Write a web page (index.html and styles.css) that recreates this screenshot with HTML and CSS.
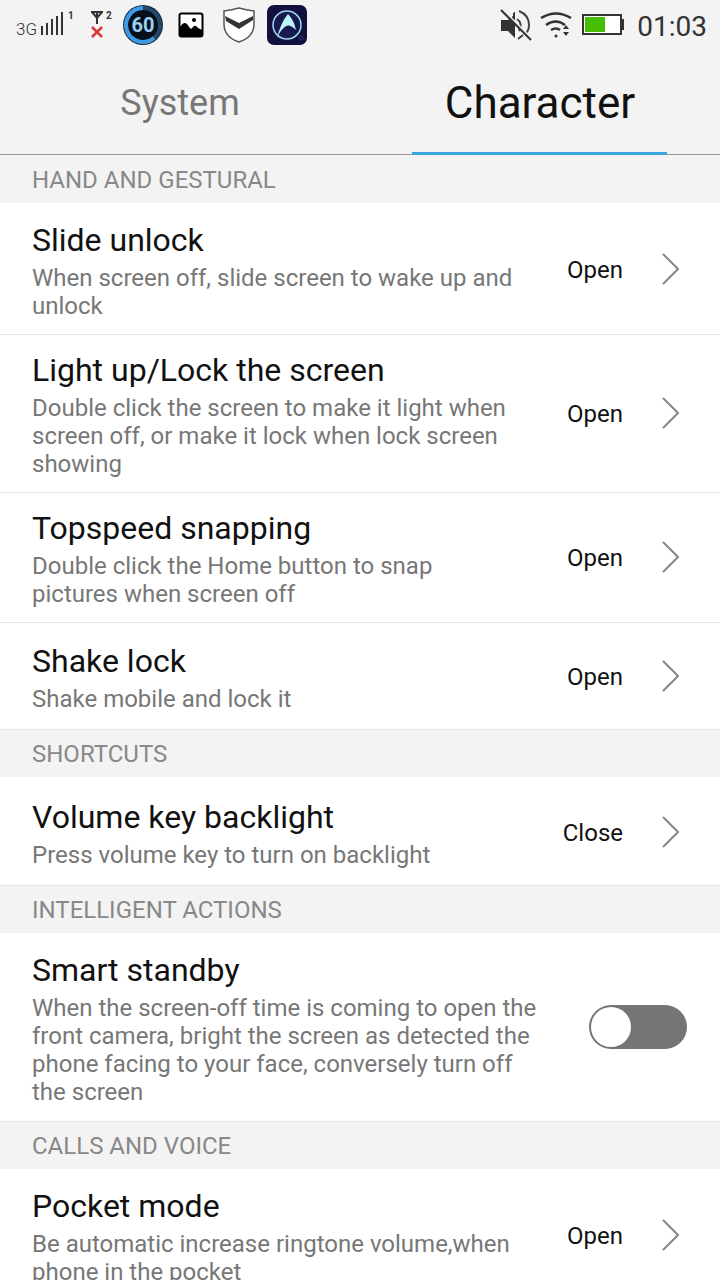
FILE: index.html
```
<!DOCTYPE html>
<html lang="en">
<head>
    <meta charset="UTF-8">
    <meta name="viewport" content="width=device-width, initial-scale=1.0">
    <title>Settings</title>
    <link rel="stylesheet" href="styles.css">
</head>
<body>
    <div class="status">
        <div class="status-left">
            <svg class="signal" width="60" height="34" viewBox="0 0 60 34">
                <text class="net" x="0" y="27">3G</text>
                <path d="M26 18v9M31 15v12M36 11v16M41 8v19M46 4v23" stroke="#333" stroke-width="2"/>
                <text class="sim" x="52" y="11">1</text>
            </svg>
            <svg class="nosignal" width="24" height="34" viewBox="0 0 24 34">
                <path d="M1 4h12M2 4l5 6 5-6M7 3v13" fill="none" stroke="#333" stroke-width="2"/>
                <path d="M2 19l10 10M12 19L2 29" stroke="#d8383b" stroke-width="2.500"/>
                <text class="sim" x="16" y="11">2</text>
            </svg>
            <svg class="app" width="40" height="40" viewBox="0 0 40 40">
                <circle cx="20" cy="20" r="20" fill="#172b3b"/>
                <circle cx="20" cy="20" r="17" fill="#07101a" stroke="#24486b" stroke-width="4"/>
                <path d="M20 3A17 17 0 1 0 31 33" fill="none" stroke="#3d9be6" stroke-width="4"/>
                <text class="sixty" x="20" y="27" text-anchor="middle">60</text>
            </svg>
            <svg class="photo" width="26" height="26" viewBox="0 0 26 26">
                <rect x="1.500" y="1.500" width="23" height="23" rx="2" fill="#fff" stroke="#000" stroke-width="2"/>
                <circle cx="16" cy="8" r="2" fill="#000"/>
                <path d="M2 15q5-8 9 0l2 2 3-3q2-1 4 2l4 2v6H2z" fill="#000"/>
            </svg>
            <svg class="shield" width="32" height="36" viewBox="0 0 32 36">
                <path d="M1 4Q9 3 16 1q7 2 15 3v13q0 13-15 18Q1 30 1 17z" fill="#fff" stroke="#555" stroke-width="1.500"/>
                <path d="M2 9l14 7 14-7v4L16 22 3 14z" fill="#333"/>
            </svg>
            <svg class="app" width="40" height="40" viewBox="0 0 40 40">
                <rect width="40" height="40" rx="7" fill="#12113d"/>
                <circle cx="20" cy="20" r="14" fill="#171950" stroke="#9ed8ee" stroke-width="1.500"/>
                <path d="M10 33Q14 17 21 9q6 6 8 16-6-6-10-4-5 3-9 12z" fill="#bdf5f7"/>
                <circle cx="34" cy="33" r="2" fill="none" stroke="#34336b"/>
            </svg>
        </div>
        <div class="status-right">
            <svg class="mute" width="32" height="32" viewBox="0 0 32 32">
                <path d="M1 11h7l5-4V4l2-1v26l-7-7H1z" fill="#333"/>
                <path d="M17 10q6 4 2 12M19 2q10 4 10 14 0 6-4 9M23 26l-5 4" fill="none" stroke="#444" stroke-width="2"/>
                <path d="M3 1l29 29" stroke="#f3f3f3" stroke-width="2"/>
                <path d="M1 1l30 30" stroke="#333" stroke-width="2"/>
            </svg>
            <svg class="wifi" width="32" height="26" viewBox="0 0 32 26">
                <path d="M1 6q15-9 30 0M6 13q10-7 19 0M11 18q5-3 9 0" fill="none" stroke="#333" stroke-width="2.500"/>
                <circle cx="16" cy="24" r="1.500" fill="#333"/>
                <path d="M23 17l3-4 3 4zM23 20h6l-3 4z" fill="#333"/>
            </svg>
            <svg class="battery" width="42" height="22" viewBox="0 0 42 22">
                <rect x="1" y="1" width="38" height="19" fill="#fff" stroke="#333" stroke-width="2"/>
                <rect x="3" y="3" width="20" height="15" fill="#45bd00"/>
                <rect x="39" y="5" width="3" height="11" fill="#333"/>
            </svg>
            <span class="clock">01:03</span>
        </div>
    </div>

    <nav class="tabs">
        <button class="tab">System</button>
        <button class="tab active">Character</button>
    </nav>

    <main class="list">
        <section>
            <h2>HAND AND GESTURAL</h2>
            <a class="row" href="#">
                <span class="text"><span class="title">Slide unlock</span><span class="desc">When screen off, slide screen to wake up and unlock</span></span>
                <span class="value">Open</span>
                <svg class="arrow" viewBox="0 0 18 32"><path d="M2 1l15 15L2 31"/></svg>
            </a>
            <a class="row" href="#">
                <span class="text"><span class="title">Light up/Lock the screen</span><span class="desc">Double click the screen to make it light when screen off, or make it lock when lock screen showing</span></span>
                <span class="value">Open</span>
                <svg class="arrow" viewBox="0 0 18 32"><path d="M2 1l15 15L2 31"/></svg>
            </a>
            <a class="row" href="#">
                <span class="text"><span class="title">Topspeed snapping</span><span class="desc">Double click the Home button to snap pictures when screen off</span></span>
                <span class="value">Open</span>
                <svg class="arrow" viewBox="0 0 18 32"><path d="M2 1l15 15L2 31"/></svg>
            </a>
            <a class="row" href="#">
                <span class="text"><span class="title">Shake lock</span><span class="desc">Shake mobile and lock it</span></span>
                <span class="value">Open</span>
                <svg class="arrow" viewBox="0 0 18 32"><path d="M2 1l15 15L2 31"/></svg>
            </a>
        </section>
        <section>
            <h2>SHORTCUTS</h2>
            <a class="row" href="#">
                <span class="text"><span class="title">Volume key backlight</span><span class="desc">Press volume key to turn on backlight</span></span>
                <span class="value">Close</span>
                <svg class="arrow" viewBox="0 0 18 32"><path d="M2 1l15 15L2 31"/></svg>
            </a>
        </section>
        <section>
            <h2>INTELLIGENT ACTIONS</h2>
            <label class="row switch-row" for="standby">
                <span class="text"><span class="title">Smart standby</span><span class="desc">When the screen-off time is coming to open the front camera, bright the screen as detected the phone facing to your face, conversely turn off the screen</span></span>
                <input class="switch" type="checkbox" id="standby">
            </label>
        </section>
        <section>
            <h2>CALLS AND VOICE</h2>
            <a class="row" href="#">
                <span class="text"><span class="title">Pocket mode</span><span class="desc">Be automatic increase ringtone volume,when phone in the pocket</span></span>
                <span class="value">Open</span>
                <svg class="arrow" viewBox="0 0 18 32"><path d="M2 1l15 15L2 31"/></svg>
            </a>
        </section>
    </main>
</body>
</html>
```
FILE: styles.css
```
*{
    box-sizing: border-box;
}
body{
    margin: 0;
    height: 100vh;
    display: flex;
    flex-direction: column;
    background-color: #f3f3f3;
    color: #111;
    font-family: Roboto, "Liberation Sans", sans-serif;
}

/* status bar */
.status{
    flex: none;
    height: 50px;
    padding: 0 13px 0 16px;
    display: flex;
    justify-content: space-between;
    align-items: center;
}
.status-left, .status-right{
    display: flex;
    align-items: center;
}
.signal{
    margin-right: 14px;
}
.nosignal{
    margin-right: 9px;
}
.photo{
    margin: 0 19px 0 15px;
}
.shield{
    margin-right: 12px;
}
.mute{
    margin-right: 8px;
}
.wifi{
    margin-right: 10px;
}
.battery{
    margin-right: 13px;
}
.net{
    font-size: 17px;
    font-weight: 300;
    fill: #333;
}
.sim{
    font-size: 10px;
    font-weight: bold;
    fill: #333;
}
.sixty{
    font-size: 20px;
    font-weight: bold;
    fill: #9bd0f5;
}
.clock{
    padding-top: 2px;
    font-size: 28px;
    color: #333;
}

/* tabs */
.tabs{
    flex: none;
    height: 105px;
    display: flex;
    border-bottom: 1px solid #999;
}
.tab{
    flex: 1;
    padding: 2px 0 0;
    border: none;
    background: none;
    font-family: inherit;
    font-size: 36px;
    color: #777;
}
.tab.active{
    position: relative;
    font-size: 44px;
    color: #111;
}
.tab.active::after{
    content: "";
    position: absolute;
    left: 52px;
    right: 53px;
    bottom: -1px;
    height: 3px;
    background-color: #39a5dc;
}

/* settings list */
.list{
    flex: 1;
    min-height: 0;
    padding-top: 1px;
    overflow-y: auto;
    scrollbar-width: none;
}
h2{
    margin: 0;
    padding: 2px 32px 0;
    font-size: 24px;
    line-height: 45px;
    font-weight: normal;
    color: #888;
}
.row{
    min-height: 107px;
    padding: 11px 41px 12px 32px;
    display: flex;
    align-items: center;
    border-bottom: 1px solid #e4e4e4;
    background-color: #fff;
    color: #111;
    text-decoration: none;
}
h2 + .row{
    min-height: 109px;
    padding-top: 13px;
}
.switch-row{
    padding-right: 33px;
    padding-bottom: 13px;
}
.text{
    flex: 1;
    padding-bottom: 2px;
}
.title, .desc{
    display: block;
}
.title{
    font-size: 32px;
    line-height: 48px;
}
.desc{
    font-size: 24px;
    line-height: 28px;
    color: #777;
}
.value{
    width: 106px;
    padding-top: 2px;
    font-size: 24px;
    text-align: right;
}
.arrow{
    width: 18px;
    height: 32px;
    margin-left: 38px;
    fill: none;
    stroke: #888;
    stroke-width: 2;
}
.switch{
    appearance: none;
    width: 98px;
    height: 44px;
    margin: 0 0 0 40px;
    padding: 2px;
    border-radius: 22px;
    background-color: #757575;
    display: flex;
}
.switch::before{
    content: "";
    width: 40px;
    height: 40px;
    border-radius: 50%;
    background-color: #fff;
}
.switch:checked{
    justify-content: flex-end;
    background-color: #39a5dc;
}
```
